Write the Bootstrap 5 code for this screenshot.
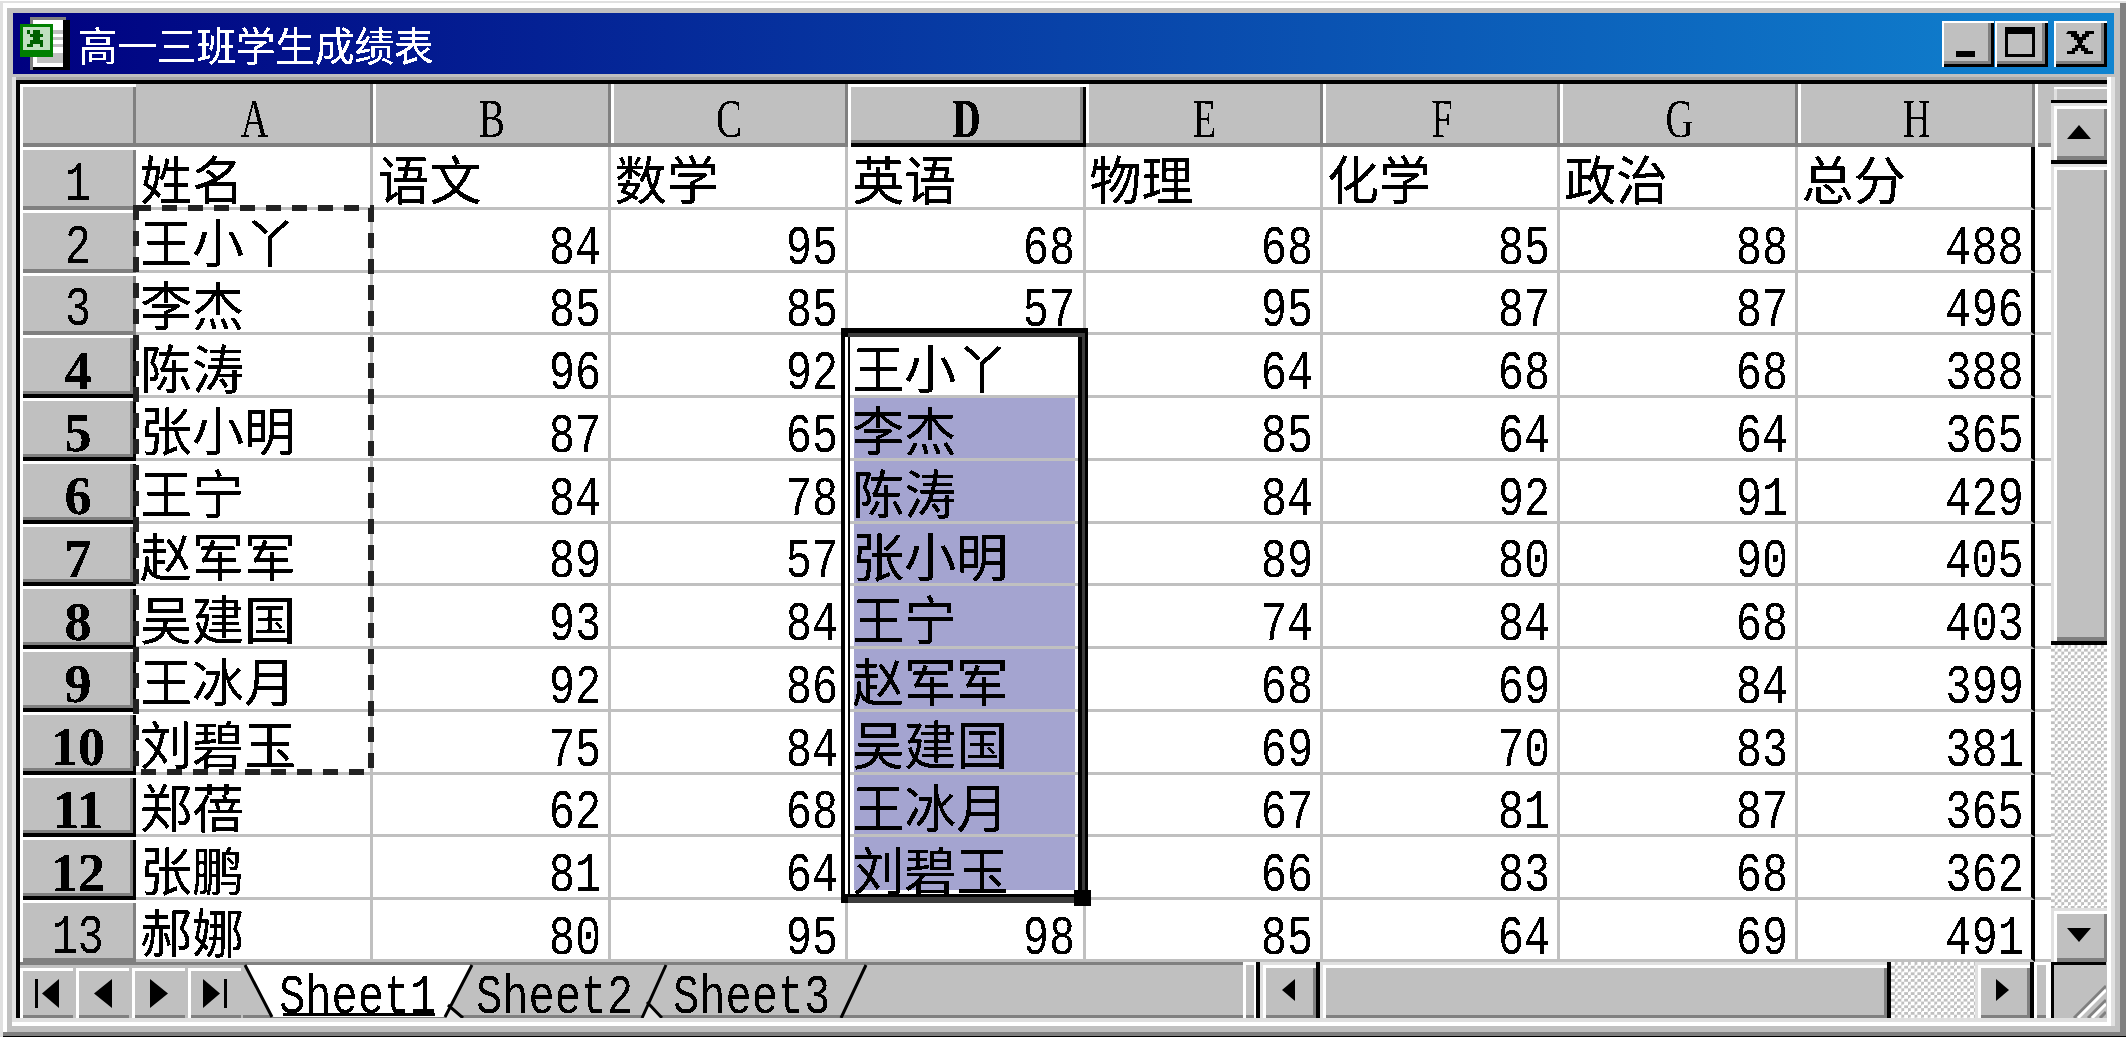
<!DOCTYPE html>
<html lang="zh-CN">
<head>
<meta charset="utf-8">
<title>高一三班学生成绩表</title>
<link href="https://cdn.jsdelivr.net/npm/bootstrap@5.3.0/dist/css/bootstrap.min.css" rel="stylesheet">
<style>
html,body{height:100%;overflow:hidden;background:#fff}
body{font-family:"Noto Sans CJK SC","Liberation Sans",sans-serif;color:#000}
.xwin{height:1037px;background:#c0c0c0;padding:13px 11px 11px 12px;
 box-shadow:inset 0 1px 0 #fff,inset 3px 3px 0 #e0e0e0,inset 0 -1px 0 #000,inset -6px -5px 0 #808080,inset 7px 8px 0 #fff}
.xtitle{height:61px;margin-left:1px;margin-right:1px;background:linear-gradient(90deg,#000080,#1084d0);color:#fff;padding-left:7px;padding-right:7px}
.xtitle-text{display:inline-block;font-size:39.5px;line-height:1;margin-left:5px;letter-spacing:0;filter:url(#crisp)}
.xbtn{height:46px;width:53px;background:#c0c0c0;box-shadow:inset 2px 2px 0 #fff,inset -3px -3px 0 #000,inset -6px -6px 0 #808080}
.xbtn.xmin{width:52px}
.xbtn.xmax{margin-left:1px}
.xbtn.xcls{margin-left:6px}
.xsunk{margin-top:3px;padding:3px 8px 8px 4px;flex:1 1 auto;min-height:0;
 box-shadow:inset -4px 0 0 #e0e0e0,inset 0 -4px 0 #fff,inset -8px 0 0 #fff,inset 0 -8px 0 #e0e0e0,inset 4px 0 0 #e0e0e0,inset 0 3px 0 #a8a8a8}
.xsheet{height:100%;background:#c0c0c0;border-top:4px solid #000;border-left:4px solid #000}
.xtop{height:878px}
.xgrid{width:2031px;height:878px;display:grid;grid-template-columns:116px repeat(8,237.4px) 1fr;grid-template-rows:63px repeat(12,62.75px) minmax(0,1fr);background:#fff}
.xcorner{box-shadow:inset 3px 3px 0 #fff,inset -3px -4px 0 #808080;background:#c0c0c0}
.xch,.xrh{background:#c0c0c0;display:flex;align-items:center;justify-content:center;min-height:0}
.xch{box-shadow:inset -3px -4px 0 #808080,inset 3px 0 0 #fff;padding-top:6px}
.xch.xa{box-shadow:inset -3px -4px 0 #808080}
.xrh{box-shadow:inset 3px 3px 0 #fff,inset -3px -4px 0 #808080;padding-top:13px}
.xrh.xon{padding-top:8px}
.xch.xon,.xrh.xon{box-shadow:inset 3px 3px 0 #fff,inset -3px -4px 0 #000,inset -6px -7px 0 #808080}
.xtailh{background:#c0c0c0;box-shadow:inset 3px 0 0 #fff,inset 0 -4px 0 #808080}
.xtail{border-bottom:3px solid #c0c0c0}
.xcl{border-right:3px solid #c0c0c0;border-bottom:3px solid #c0c0c0;display:flex;align-items:center;overflow:visible;white-space:nowrap;padding-top:18px;min-width:0;min-height:0}
.xcl.xt{padding-left:4px;padding-top:3px;font-size:52px;line-height:1}
.xcl.xt span{display:inline-block;line-height:1;filter:url(#crisp)}
.xcl.xn{justify-content:flex-end;padding-right:7px}
.xcl.xh{border-right:4px solid #000}
.xcl.xpick{background:linear-gradient(#a4a4d0,#a4a4d0) no-repeat;background-origin:padding-box;background-clip:padding-box;background-size:221px 100%;background-position:6px 0}
.xcl.xlast{background-size:221px calc(100% - 7px)}
.xm{display:inline-block;font-family:"Liberation Mono",monospace;font-size:56px;line-height:44px;transform:scaleX(.78);filter:url(#thin)}
.xcl.xn .xm{transform-origin:100% 50%}
.xl{display:inline-block;font-family:"Liberation Serif",serif;font-size:54px;line-height:50px;transform:scaleX(.72);filter:url(#thin)}
.xb{display:inline-block;font-family:"Liberation Serif",serif;font-weight:700;font-size:54px;line-height:44px;filter:url(#crisp)}
.xch .xb{transform:scaleX(.72)}
.xants{position:absolute;inset:0;width:100%;height:100%;pointer-events:none}
.xsel{position:absolute;left:821px;top:244px;width:247px;height:575px;border-style:solid;border-color:#000;border-width:9px 10px 9px 4px;box-shadow:inset 3px 0 0 #fff,inset 5px 0 0 #000;pointer-events:none}
.xsel::before{content:"";position:absolute;left:3px;right:-7px;top:-4px;bottom:-9px;border-style:solid;border-color:#3c3c3c;border-width:4px 3px 6px 0}
.xgrab{position:absolute;right:-13px;bottom:-12px;width:17px;height:16px;background:#000}
.xv{width:56px;background:#c0c0c0}
.xsplit{height:19px;border-bottom:3px solid #000;padding:3px 0 0 3px}
.xsplit i{display:block;height:13px;background:#c0c0c0;box-shadow:inset 0 2px 0 #fff,inset 3px 0 0 #e0e0e0}
.xsb{background:#c0c0c0;box-shadow:inset 3px 3px 0 #e0e0e0,inset 6px 6px 0 #fff,inset -3px -4px 0 #808080;display:flex;align-items:center;justify-content:center}
.xvblack{border-bottom:4px solid #000;height:61px}
.xthumb{height:481px;background:#c0c0c0;border-bottom:4px solid #000;box-shadow:inset 3px 3px 0 #e0e0e0,inset 6px 6px 0 #fff,inset -3px -4px 0 #808080}
.xcheck{background-color:#fff;background-image:conic-gradient(#c0c0c0 25%,#fff 0 50%,#c0c0c0 0 75%,#fff 0);background-size:6.6px 6.6px}
.xbot{height:56px;background:#c0c0c0}
.xnavs{padding-top:3px;border-top:3px solid #808080;gap:3px;width:223px}
.xnb{width:53px;background:#c0c0c0;box-shadow:inset 3px 3px 0 #fff,inset 0 -3px 0 #808080;display:flex;align-items:center;justify-content:center}
.xtabs{width:1000px;position:relative;background:#c0c0c0}
.xtabs svg{position:absolute;left:0;top:0;width:100%;height:100%}
.xtab{position:relative;display:inline-block;font-family:"Liberation Mono",monospace;font-size:56px;line-height:1;transform:scaleX(.78);transform-origin:0 50%;filter:url(#thin)}
.xtabrow{position:relative;height:100%;padding-top:8px;gap:0}
.xtw{width:199px;height:48px;flex:0 0 199px}
.xtw.xt1{margin-left:36px}
.xtw.xt2{margin-left:-2px}
.xsp1{width:17px;background:#c0c0c0;box-shadow:inset 3px 3px 0 #fff,inset -2px 0 0 #fff,inset 0 -3px 0 #808080;border-right:4px solid #000}
.xhb{background:#c0c0c0;box-shadow:inset 3px 3px 0 #e0e0e0,inset 6px 6px 0 #fff,inset -3px -3px 0 #808080;display:flex;align-items:center;justify-content:center}
.xhl{border-right:4px solid #000;box-sizing:border-box;width:60px}
.xhthumb{width:571px;background:#c0c0c0;border-right:4px solid #000;box-shadow:inset 3px 3px 0 #e0e0e0,inset 6px 6px 0 #fff,inset -3px -3px 0 #808080}
.xhcheck{width:84px}
.xhr{width:55px}
.xhv{width:4px;background:#000}
.xhm{width:17px;background:#c0c0c0;box-shadow:inset 3px 3px 0 #fff,inset -5px 0 0 #fff,inset 0 -3px 0 #808080}
.xgrip{width:55px;border-left:3px solid #000;border-top:3px solid #000;background:#c0c0c0;position:relative;overflow:hidden}
.xgrip svg{position:absolute;right:0;bottom:0}
.xdown{height:54px}
</style>
</head>
<body class="m-0">
<svg width="0" height="0" class="position-absolute"><filter id="crisp" x="-5%" y="-5%" width="110%" height="110%" color-interpolation-filters="sRGB"><feComponentTransfer><feFuncA type="discrete" tableValues="0 1 1"/></feComponentTransfer></filter><filter id="thin" x="-5%" y="-5%" width="110%" height="110%" color-interpolation-filters="sRGB"><feComponentTransfer><feFuncA type="discrete" tableValues="0 1"/></feComponentTransfer></filter></svg>
<div class="xwin d-flex flex-column">
  <div class="xtitle d-flex align-items-center flex-shrink-0">
    <svg width="53" height="53" viewBox="0 0 16 16" shape-rendering="crispEdges" class="flex-shrink-0">
      <rect x="3" y="0" width="11" height="16" fill="#808080"/><rect x="4" y="1" width="9" height="14" fill="#fff"/><rect x="13" y="1" width="2" height="15" fill="#000"/><rect x="4" y="15" width="11" height="1" fill="#000"/>
      <rect x="10" y="4" width="3" height="1" fill="#c0c0c0"/><rect x="10" y="6" width="3" height="1" fill="#c0c0c0"/><rect x="10" y="8" width="3" height="1" fill="#c0c0c0"/><rect x="5" y="11" width="8" height="3" fill="#c0c0c0"/>
      <rect x="0" y="2" width="10" height="10" fill="#008000"/>
      <rect x="1" y="3" width="8" height="7" fill="#c0e0c0"/>
      <path d="M2 4h1v1h1V4h2v1h1v1H6v1h1v2H6V8H4v1H2V8h1V7h1V6H3V5H2z" fill="#006000"/>
    </svg>
    <span class="xtitle-text">高一三班学生成绩表</span>
    <div class="ms-auto d-flex">
      <div class="xbtn xmin"><svg width="52" height="46"><rect x="14" y="30" width="19" height="6"/></svg></div>
      <div class="xbtn xmax"><svg width="53" height="46"><path fill-rule="evenodd" d="M10 6h30v30H10zM13 13v20h24V13z"/></svg></div>
      <div class="xbtn xcls"><svg width="53" height="46"><path d="M14 10h9v3h2v3h3v-3h3v-3h9v3h-5v3h-3v3h-3v3h-1v2h3v3h3v3h5v3h-9v-3h-3v-3h-3v3h-3v3h-8v-3h5v-3h3v-3h3v-2h-1v-3h-3v-3h-3v-3h-5z"/></svg></div>
    </div>
  </div>
  <div class="xsunk">
    <div class="xsheet d-flex flex-column">
      <div class="xtop d-flex">
        <div class="xgrid position-relative">
          <div class="xcorner"></div>
          <div class="xch xa"><span class="xl">A</span></div><div class="xch"><span class="xl">B</span></div><div class="xch"><span class="xl">C</span></div><div class="xch xon"><span class="xb">D</span></div><div class="xch"><span class="xl">E</span></div><div class="xch"><span class="xl">F</span></div><div class="xch"><span class="xl">G</span></div><div class="xch"><span class="xl">H</span></div><div class="xtailh"></div>

          <div class="xrh"><span class="xm">1</span></div><div class="xcl xt"><span>姓名</span></div><div class="xcl xt"><span>语文</span></div><div class="xcl xt"><span>数学</span></div><div class="xcl xt"><span>英语</span></div><div class="xcl xt"><span>物理</span></div><div class="xcl xt"><span>化学</span></div><div class="xcl xt"><span>政治</span></div><div class="xcl xt xh"><span>总分</span></div><div class="xtail"></div>

          <div class="xrh"><span class="xm">2</span></div><div class="xcl xt"><span>王小丫</span></div><div class="xcl xn"><span class="xm">84</span></div><div class="xcl xn"><span class="xm">95</span></div><div class="xcl xn"><span class="xm">68</span></div><div class="xcl xn"><span class="xm">68</span></div><div class="xcl xn"><span class="xm">85</span></div><div class="xcl xn"><span class="xm">88</span></div><div class="xcl xn xh"><span class="xm">488</span></div><div class="xtail"></div>

          <div class="xrh"><span class="xm">3</span></div><div class="xcl xt"><span>李杰</span></div><div class="xcl xn"><span class="xm">85</span></div><div class="xcl xn"><span class="xm">85</span></div><div class="xcl xn"><span class="xm">57</span></div><div class="xcl xn"><span class="xm">95</span></div><div class="xcl xn"><span class="xm">87</span></div><div class="xcl xn"><span class="xm">87</span></div><div class="xcl xn xh"><span class="xm">496</span></div><div class="xtail"></div>

          <div class="xrh xon"><span class="xb">4</span></div><div class="xcl xt"><span>陈涛</span></div><div class="xcl xn"><span class="xm">96</span></div><div class="xcl xn"><span class="xm">92</span></div><div class="xcl xt"><span>王小丫</span></div><div class="xcl xn"><span class="xm">64</span></div><div class="xcl xn"><span class="xm">68</span></div><div class="xcl xn"><span class="xm">68</span></div><div class="xcl xn xh"><span class="xm">388</span></div><div class="xtail"></div>

          <div class="xrh xon"><span class="xb">5</span></div><div class="xcl xt"><span>张小明</span></div><div class="xcl xn"><span class="xm">87</span></div><div class="xcl xn"><span class="xm">65</span></div><div class="xcl xt xpick"><span>李杰</span></div><div class="xcl xn"><span class="xm">85</span></div><div class="xcl xn"><span class="xm">64</span></div><div class="xcl xn"><span class="xm">64</span></div><div class="xcl xn xh"><span class="xm">365</span></div><div class="xtail"></div>

          <div class="xrh xon"><span class="xb">6</span></div><div class="xcl xt"><span>王宁</span></div><div class="xcl xn"><span class="xm">84</span></div><div class="xcl xn"><span class="xm">78</span></div><div class="xcl xt xpick"><span>陈涛</span></div><div class="xcl xn"><span class="xm">84</span></div><div class="xcl xn"><span class="xm">92</span></div><div class="xcl xn"><span class="xm">91</span></div><div class="xcl xn xh"><span class="xm">429</span></div><div class="xtail"></div>

          <div class="xrh xon"><span class="xb">7</span></div><div class="xcl xt"><span>赵军军</span></div><div class="xcl xn"><span class="xm">89</span></div><div class="xcl xn"><span class="xm">57</span></div><div class="xcl xt xpick"><span>张小明</span></div><div class="xcl xn"><span class="xm">89</span></div><div class="xcl xn"><span class="xm">80</span></div><div class="xcl xn"><span class="xm">90</span></div><div class="xcl xn xh"><span class="xm">405</span></div><div class="xtail"></div>

          <div class="xrh xon"><span class="xb">8</span></div><div class="xcl xt"><span>吴建国</span></div><div class="xcl xn"><span class="xm">93</span></div><div class="xcl xn"><span class="xm">84</span></div><div class="xcl xt xpick"><span>王宁</span></div><div class="xcl xn"><span class="xm">74</span></div><div class="xcl xn"><span class="xm">84</span></div><div class="xcl xn"><span class="xm">68</span></div><div class="xcl xn xh"><span class="xm">403</span></div><div class="xtail"></div>

          <div class="xrh xon"><span class="xb">9</span></div><div class="xcl xt"><span>王冰月</span></div><div class="xcl xn"><span class="xm">92</span></div><div class="xcl xn"><span class="xm">86</span></div><div class="xcl xt xpick"><span>赵军军</span></div><div class="xcl xn"><span class="xm">68</span></div><div class="xcl xn"><span class="xm">69</span></div><div class="xcl xn"><span class="xm">84</span></div><div class="xcl xn xh"><span class="xm">399</span></div><div class="xtail"></div>

          <div class="xrh xon"><span class="xb">10</span></div><div class="xcl xt"><span>刘碧玉</span></div><div class="xcl xn"><span class="xm">75</span></div><div class="xcl xn"><span class="xm">84</span></div><div class="xcl xt xpick"><span>吴建国</span></div><div class="xcl xn"><span class="xm">69</span></div><div class="xcl xn"><span class="xm">70</span></div><div class="xcl xn"><span class="xm">83</span></div><div class="xcl xn xh"><span class="xm">381</span></div><div class="xtail"></div>

          <div class="xrh xon"><span class="xb">11</span></div><div class="xcl xt"><span>郑蓓</span></div><div class="xcl xn"><span class="xm">62</span></div><div class="xcl xn"><span class="xm">68</span></div><div class="xcl xt xpick"><span>王冰月</span></div><div class="xcl xn"><span class="xm">67</span></div><div class="xcl xn"><span class="xm">81</span></div><div class="xcl xn"><span class="xm">87</span></div><div class="xcl xn xh"><span class="xm">365</span></div><div class="xtail"></div>

          <div class="xrh xon"><span class="xb">12</span></div><div class="xcl xt"><span>张鹏</span></div><div class="xcl xn"><span class="xm">81</span></div><div class="xcl xn"><span class="xm">64</span></div><div class="xcl xt xpick xlast"><span>刘碧玉</span></div><div class="xcl xn"><span class="xm">66</span></div><div class="xcl xn"><span class="xm">83</span></div><div class="xcl xn"><span class="xm">68</span></div><div class="xcl xn xh"><span class="xm">362</span></div><div class="xtail"></div>

          <div class="xrh"><span class="xm">13</span></div><div class="xcl xt"><span>郝娜</span></div><div class="xcl xn"><span class="xm">80</span></div><div class="xcl xn"><span class="xm">95</span></div><div class="xcl xn"><span class="xm">98</span></div><div class="xcl xn"><span class="xm">85</span></div><div class="xcl xn"><span class="xm">64</span></div><div class="xcl xn"><span class="xm">69</span></div><div class="xcl xn xh"><span class="xm">491</span></div><div class="xtail"></div>

          <svg class="xants"><rect x="116" y="124" width="235" height="564" fill="none" stroke="#222" stroke-width="6" stroke-dasharray="15 11"/></svg>
          <div class="xsel"><div class="xgrab"></div></div>
        </div>
        <div class="xv d-flex flex-column">
          <div class="xsplit"><i></i></div>
          <div class="xsb xvblack"><svg width="24" height="14"><polygon points="12,0 24,14 0,14"/></svg></div>
          <div class="xthumb"></div>
          <div class="xcheck flex-grow-1"></div>
          <div class="xsb xdown"><svg width="24" height="14"><polygon points="0,0 24,0 12,14"/></svg></div>
        </div>
      </div>
      <div class="xbot d-flex">
        <div class="xnavs d-flex">
          <div class="xnb"><svg width="24" height="29"><rect width="3" height="29"/><polygon points="7,14.5 24,0 24,29"/></svg></div>
          <div class="xnb"><svg width="18" height="29"><polygon points="0,14.5 18,0 18,29"/></svg></div>
          <div class="xnb"><svg width="18" height="29"><polygon points="18,14.5 0,0 0,29"/></svg></div>
          <div class="xnb"><svg width="24" height="29"><polygon points="17,14.5 0,0 0,29"/><rect x="21" width="3" height="29"/></svg></div>
        </div>
        <div class="xtabs">
          <svg><rect x="0" y="0" width="1000" height="3" fill="#808080"/><rect x="0" y="53" width="1000" height="3" fill="#808080"/>
            <polygon points="1,3 29,55 201,55 229,3" fill="#fff"/>
            <polygon points="203,56 209,43 220,56" fill="#e0e0e0"/>
            <polygon points="399,56 405,40 420,56" fill="#e0e0e0"/>
            <g fill="none" stroke="#000" stroke-width="3"><path d="M2 3L29 55M229 3L202 55M205 43L220 56M423 3L399 56M404 40L419 56M623 3L598 56"/><path d="M40 52.500H192"/></g></svg>
          <div class="xtabrow d-flex">
            <div class="xtw xt1"><span class="xtab">Sheet1</span></div>
            <div class="xtw xt2"><span class="xtab">Sheet2</span></div>
            <div class="xtw xt2"><span class="xtab">Sheet3</span></div>
          </div>
        </div>
        <div class="xsp1"></div>
        <div class="xhb xhl"><svg width="13" height="22"><polygon points="0,11 13,0 13,22"/></svg></div>
        <div class="xhthumb"></div>
        <div class="xcheck xhcheck"></div>
        <div class="xhb xhr"><svg width="13" height="22"><polygon points="13,11 0,0 0,22"/></svg></div>
        <div class="xhv"></div>
        <div class="xhm"></div>
        <div class="xgrip"><svg width="40" height="40"><g stroke-width="3" fill="none"><path d="M40 8L8 40M40 22L22 40M40 34L34 40" stroke="#808080"/><path d="M40 12L12 40M40 26L26 40" stroke="#fff"/></g></svg></div>
      </div>
    </div>
  </div>
</div>
<script src="https://cdn.jsdelivr.net/npm/bootstrap@5.3.0/dist/js/bootstrap.bundle.min.js"></script>
</body>
</html>
